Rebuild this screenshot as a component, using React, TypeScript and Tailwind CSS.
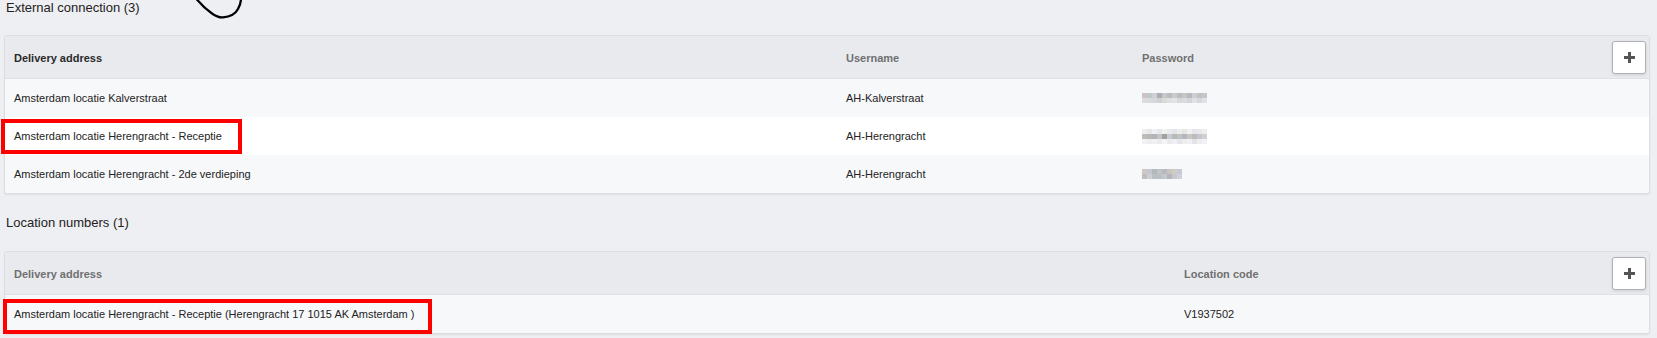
import React from 'react'

type Row = {
  address: string
  username: string
  mosaic: string[][]
  marked?: boolean
}

const rows: Row[] = [
  {
    address: 'Amsterdam locatie Kalverstraat',
    username: 'AH-Kalverstraat',
    mosaic: [
      ['#cbc4c2', '#bfc8ca', '#cfcfd3', '#a9aeb4', '#c4c8c9', '#b9bcc2', '#c8cdc9', '#babdc6', '#c7c7c1', '#b6b9c2', '#cbced2', '#c0c2c6', '#c4c7cb'],
      ['#dcdcdd', '#d8dbdc', '#d5d7da', '#cfd2d5', '#d9dbd9', '#dee0e1', '#e1e3e4', '#d7d9dc', '#dadcdd', '#d3d5d8', '#dfe1e2', '#d6d8db', '#dfe3e6'],
    ],
  },
  {
    address: 'Amsterdam locatie Herengracht - Receptie',
    username: 'AH-Herengracht',
    marked: true,
    mosaic: [
      ['#eeeef0', '#e8e6e6', '#eef2f6', '#e6e8ea', '#f0f0f0', '#eaeaee', '#e2e4e8', '#ececef', '#e6e6e0', '#f0f0f2', '#e4e6ea', '#e8e8ec', '#eeeeef'],
      ['#c0bcba', '#b8b8b6', '#b4b4b4', '#c4c4c8', '#9fa19f', '#c8ccd0', '#b4bab6', '#c0c2c4', '#b8b4c4', '#c6c8c2', '#bcbcc0', '#c4c6ca', '#d0d0d4'],
      ['#f2f2f4', '#eeeef0', '#f0f0f2', '#ebebee', '#f4f4f6', '#eaeaee', '#f0f0f4', '#e6e6ea', '#eeeef0', '#f0f0f2', '#e4e4e8', '#eeeef0', '#f2f2f4'],
    ],
  },
  {
    address: 'Amsterdam locatie Herengracht - 2de verdieping',
    username: 'AH-Herengracht',
    mosaic: [
      ['#cdc8c6', '#c4c8cc', '#b4b8bc', '#c0c4c4', '#b8b8c0', '#c8c4c0', '#d0ccc4', '#c8c8d4'],
      ['#c0bcc0', '#ccd0d4', '#b8c0c4', '#bcc0c4', '#c4c8c8', '#b8b4bc', '#c8c8c8', '#d0d0dc'],
    ],
  },
]

function Mosaic({ blocks }: { blocks: string[][] }) {
  return (
    <div className="flex flex-col">
      {blocks.map((line, i) => (
        <div key={i} className="flex">
          {line.map((c, j) => (
            <div key={j} className="w-[5px] h-[5px]" style={{ backgroundColor: c }} />
          ))}
        </div>
      ))}
    </div>
  )
}

function AddButton() {
  return (
    <button className="w-[34px] h-[33px] flex items-center justify-center bg-white border border-[#aeb1b6] rounded-[3px] shadow-[0_1px_3px_rgba(0,0,0,0.12)]">
      <svg width="11" height="11" viewBox="0 0 11 11">
        <rect x="4" y="0" width="3" height="11" fill="#555" />
        <rect x="0" y="4" width="11" height="3" fill="#555" />
      </svg>
    </button>
  )
}

export default function App() {
  return (
    <div
      className="relative min-h-screen bg-[#eeeff2] pl-[4px] pr-[7px] text-[#232323]"
      style={{ fontFamily: '"Liberation Sans", Arial, sans-serif' }}
    >
      {/* pen annotation */}
      <svg className="absolute left-[190px] top-0" width="60" height="22" viewBox="0 0 60 22" fill="none">
        <path
          d="M6.5,-1 Q14,8 22,13.5 Q28,17.8 33,17.4 Q44,16.5 48,9 Q50.8,4 51,-1"
          stroke="#000"
          strokeWidth="2.3"
          strokeLinecap="round"
        />
      </svg>

      {/* External connection */}
      <h2 className="pl-[2px] text-[13px] leading-[16px] font-normal text-[#222]">External connection (3)</h2>

      <div className="mt-[19px] bg-white border border-[#dcdee2] rounded-[3px] shadow-[0_1px_2px_rgba(0,0,0,0.07)]">
        <div className="grid grid-cols-[832px_296px_1fr] h-[43px] bg-[#e9eaee] border-b border-[#dfe0e4] rounded-t-[3px] text-[11px] font-bold">
          <div className="flex items-center pl-[9px] pt-[2px] text-[#2a2a2a]">Delivery address</div>
          <div className="flex items-center pl-[9px] pt-[2px] text-[#707070]">Username</div>
          <div className="flex items-center justify-between pl-[9px] pr-[3px] text-[#707070]">
            <span className="pt-[2px]">Password</span>
            <AddButton />
          </div>
        </div>
        {rows.map((row, i) => (
          <div
            key={i}
            className={`grid grid-cols-[832px_296px_1fr] h-[38px] text-[11px] ${
              i % 2 === 0 ? 'bg-[#f7f8fa]' : 'bg-white'
            } ${i === rows.length - 1 ? 'rounded-b-[3px]' : ''}`}
          >
            <div className="flex items-center pl-[9px]">
              <span className="relative leading-[13px]">
                {row.address}
                {row.marked && (
                  <span className="absolute left-[-13px] right-[-20px] top-[-11px] bottom-[-11px] border-[4px] border-[#ff0000]" />
                )}
              </span>
            </div>
            <div className="flex items-center pl-[9px]">{row.username}</div>
            <div className="flex items-center pl-[9px]">
              <Mosaic blocks={row.mosaic} />
            </div>
          </div>
        ))}
      </div>

      {/* Location numbers */}
      <h2 className="mt-[21px] pl-[2px] text-[13px] leading-[16px] font-normal text-[#222]">Location numbers (1)</h2>

      <div className="mt-[20px] bg-white border border-[#dcdee2] rounded-[3px] shadow-[0_1px_2px_rgba(0,0,0,0.07)]">
        <div className="grid grid-cols-[1170px_1fr] h-[43px] bg-[#e9eaee] border-b border-[#dfe0e4] rounded-t-[3px] text-[11px] font-bold text-[#707070]">
          <div className="flex items-center pl-[9px] pt-[2px]">Delivery address</div>
          <div className="flex items-center justify-between pl-[9px] pr-[3px]">
            <span className="pt-[2px]">Location code</span>
            <AddButton />
          </div>
        </div>
        <div className="grid grid-cols-[1170px_1fr] h-[38px] bg-[#f7f8fa] rounded-b-[3px] text-[11px]">
          <div className="flex items-center pl-[9px]">
            <span className="relative leading-[13px]">
              Amsterdam locatie Herengracht - Receptie (Herengracht 17 1015 AK Amsterdam )
              <span className="absolute left-[-11px] right-[-18px] top-[-9px] bottom-[-13px] border-[4px] border-[#ff0000]" />
            </span>
          </div>
          <div className="flex items-center pl-[9px]">V1937502</div>
        </div>
      </div>
    </div>
  )
}
